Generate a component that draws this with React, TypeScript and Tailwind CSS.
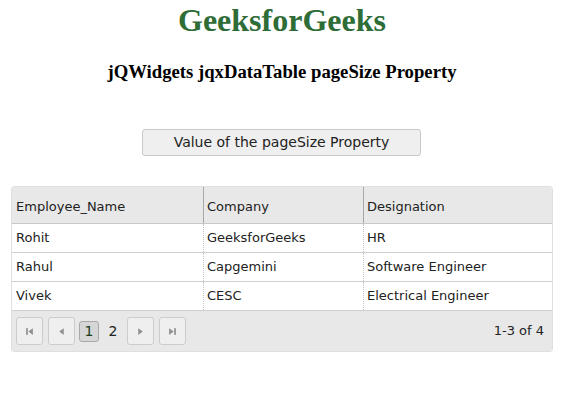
const rows = [
  { name: "Rohit", company: "GeeksforGeeks", designation: "HR" },
  { name: "Rahul", company: "Capgemini", designation: "Software Engineer" },
  { name: "Vivek", company: "CESC", designation: "Electrical Engineer" },
];

const FONT = "font-['Verdana','DejaVu_Sans',sans-serif]";

function PagerButton({ children }: { children: React.ReactNode }) {
  return (
    <div className="w-[27px] h-[28px] rounded-[3px] border border-[#cccccc] bg-[#efefef] flex items-center justify-center text-[#909090]">
      {children}
    </div>
  );
}

export default function App() {
  return (
    <div className="w-[576px] h-[407px] bg-white font-['Liberation_Serif',serif] text-black">
      {/* Headings */}
      <div className="w-[564px] flex flex-col items-center">
        <h1 className="text-[32px] leading-[37px] font-bold text-[#2f6d37] pt-[2px]">GeeksforGeeks</h1>
        <h3 className="text-[18.7px] leading-[22px] font-bold mt-[22px]">jQWidgets jqxDataTable pageSize Property</h3>
      </div>

      {/* Button */}
      <div className="flex mt-[46px] pl-[142px]">
        <button
          className={`w-[279px] h-[27px] rounded-[3px] border border-[#c9c9c9] bg-[#efefef] text-[14px] leading-[25px] text-[#222] ${FONT}`}
        >
          Value of the pageSize Property
        </button>
      </div>

      {/* Data table */}
      <div
        className={`ml-[11px] mt-[30px] w-[542px] rounded-[3px] border border-[#e0e0e0] overflow-hidden text-[13px] text-[#222] ${FONT}`}
      >
        <div className="flex h-[37px] bg-[#e8e8e8] border-b border-[#c8c8c8]">
          <div className="w-[191px] pl-[4px] pt-[3px] flex items-center">Employee_Name</div>
          <div className="w-[160px] pl-[3px] pt-[3px] flex items-center border-l border-[#a8a8a8]">Company</div>
          <div className="flex-1 pl-[3px] pt-[3px] flex items-center border-l border-[#a8a8a8]">Designation</div>
        </div>
        {rows.map((r) => (
          <div key={r.name} className="flex h-[29px] bg-white border-b border-[#d0d0d0]">
            <div className="w-[191px] pl-[4px] flex items-center">{r.name}</div>
            <div className="w-[160px] pl-[3px] flex items-center border-l border-dotted border-[#c4c4c4]">{r.company}</div>
            <div className="flex-1 pl-[3px] flex items-center border-l border-dotted border-[#c4c4c4]">{r.designation}</div>
          </div>
        ))}
        <div className="flex items-center h-[40px] bg-[#e8e8e8] pl-[4px] pr-[8px]">
          <div className="flex items-center gap-[5px]">
            <PagerButton>
              <svg width="9" height="9" viewBox="0 0 8 8" fill="currentColor">
                <rect x="1" y="1" width="1.5" height="6" />
                <path d="M7 1 L3 4 L7 7 Z" />
              </svg>
            </PagerButton>
            <PagerButton>
              <svg width="9" height="9" viewBox="0 0 8 8" fill="currentColor">
                <path d="M6 1 L2 4 L6 7 Z" />
              </svg>
            </PagerButton>
            <div className="w-[20px] h-[21px] ml-[-1px] rounded-[3px] border border-[#a9a9a9] bg-[#d6d6d6] flex items-center justify-center text-[14px] text-[#1d3a1d]">
              1
            </div>
            <div className="w-[18px] h-[21px] flex items-center justify-center text-[14px] text-[#222]">2</div>
            <PagerButton>
              <svg width="9" height="9" viewBox="0 0 8 8" fill="currentColor">
                <path d="M2 1 L6 4 L2 7 Z" />
              </svg>
            </PagerButton>
            <PagerButton>
              <svg width="9" height="9" viewBox="0 0 8 8" fill="currentColor">
                <path d="M1 1 L5 4 L1 7 Z" />
                <rect x="5.5" y="1" width="1.5" height="6" />
              </svg>
            </PagerButton>
          </div>
          <div className="ml-auto">1-3 of 4</div>
        </div>
      </div>
    </div>
  );
}
